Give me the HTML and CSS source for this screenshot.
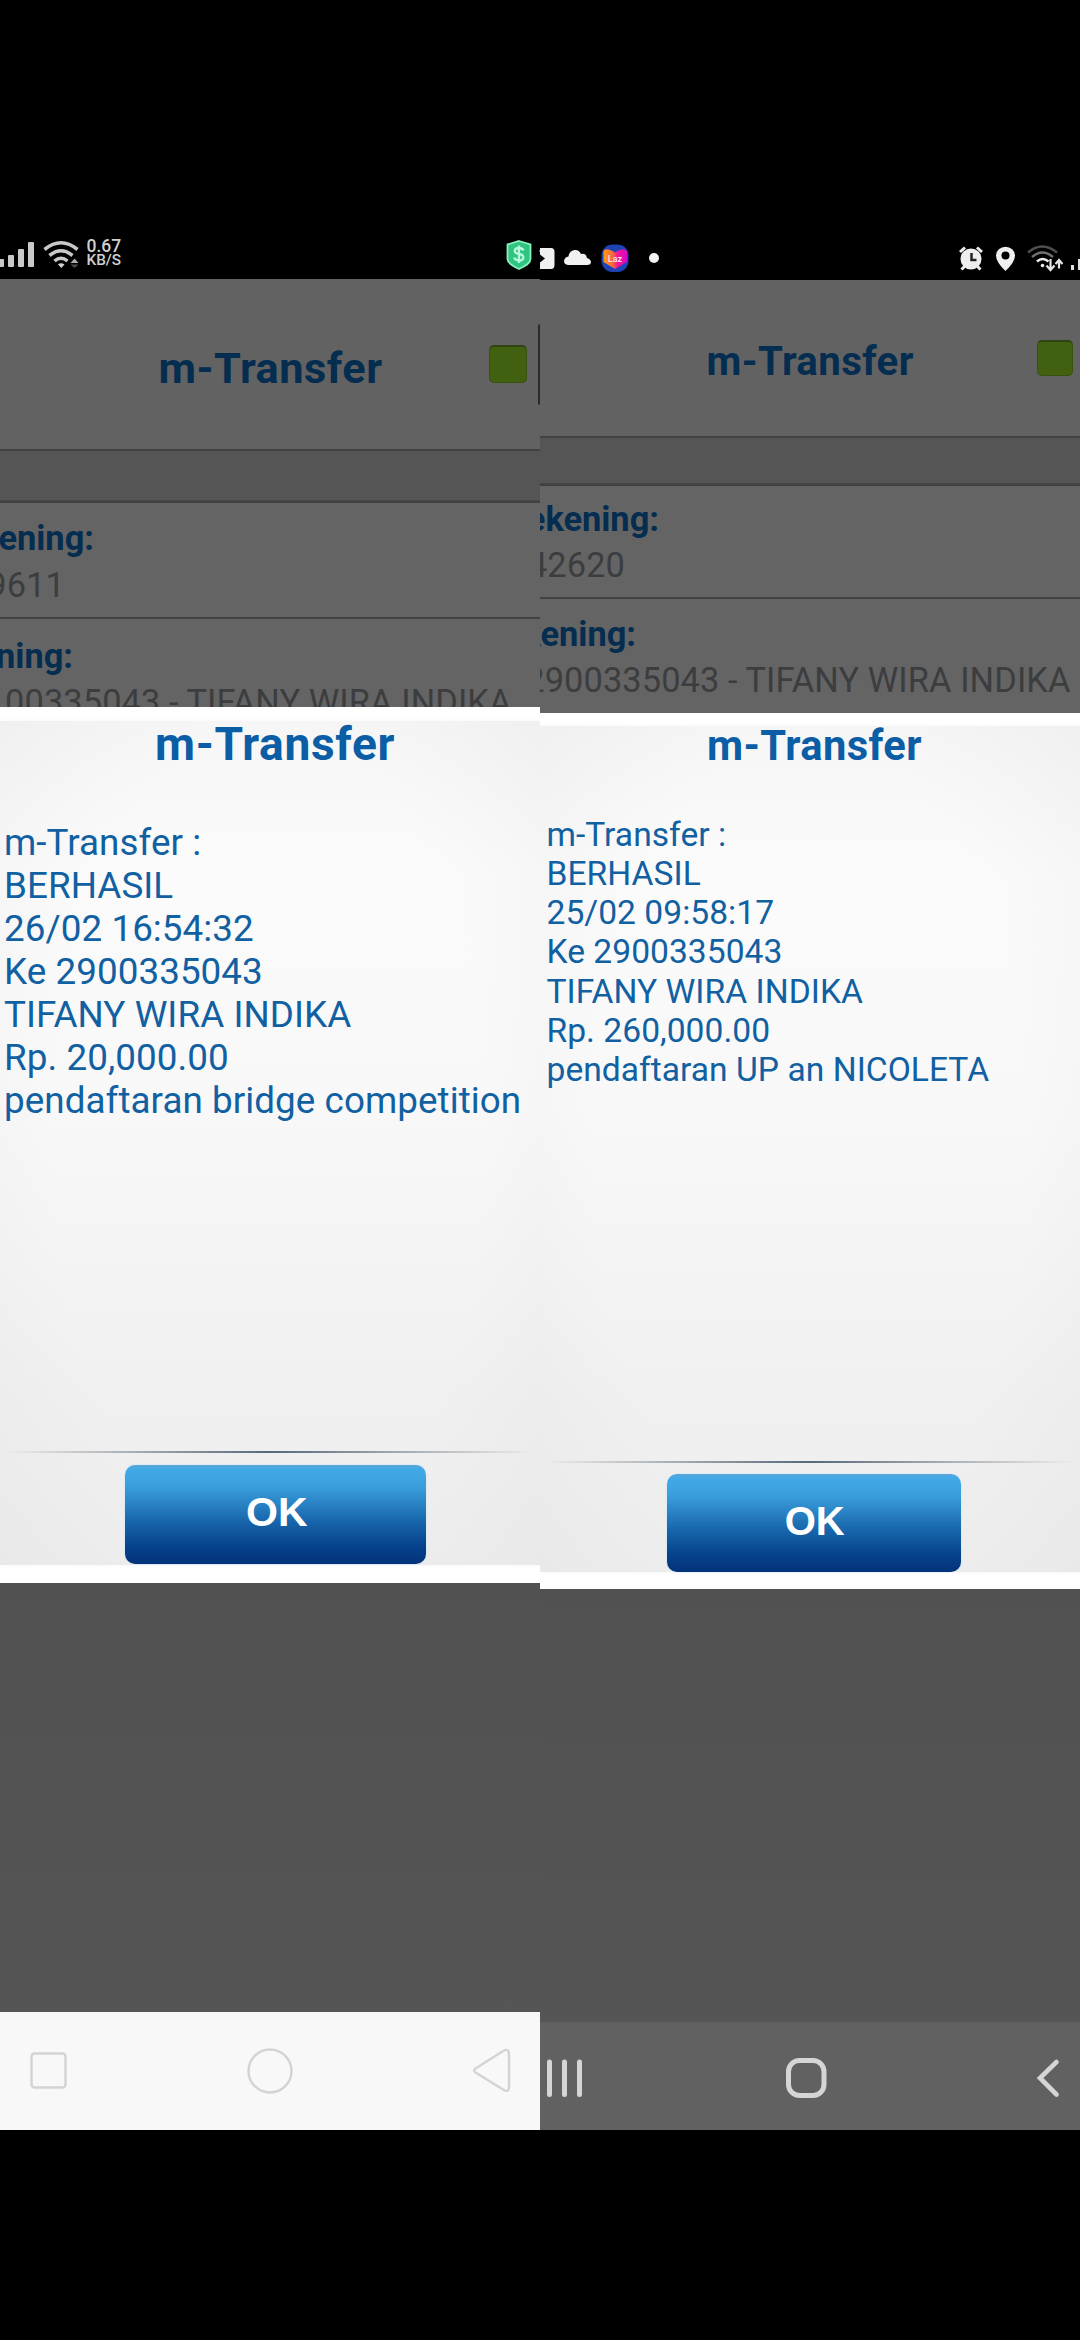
FILE: index.html
```html
<!DOCTYPE html>
<html lang="id">
<head>
<meta charset="utf-8">
<title>m-Transfer</title>
<link rel="stylesheet" href="styles.css">
</head>
<body>
<main class="board">
  <section class="phone phone-a">
    <div class="status">
      <svg class="status-left" width="82" height="45" viewBox="0 0 82 45">
        <g fill="#c9c9c9"><rect x="-3" y="24" width="7" height="8" rx="1"/><rect x="8" y="20" width="6" height="12" rx="1"/><rect x="18" y="14" width="6" height="18" rx="1"/><rect x="28" y="7" width="6" height="25" rx="1"/></g>
        <g fill="none" stroke="#c9c9c9" stroke-width="3.6"><path d="M44.500 14.500Q61 1 77.500 14.500"/><path d="M49.500 20.500Q61 11 72.500 20.500"/><path d="M54.500 26Q61 20.500 67.500 26"/></g>
        <path d="M58 29.500Q61 27 64.500 29.500L61.300 33Z" fill="#d4d4d4"/>
        <path d="M70.500 28L74.500 23.500L78.500 28Z" fill="#aaa"/><path d="M70.500 29.500L74.500 33L78.500 29.500Z" fill="#4c4c4c"/>
      </svg>
      <div class="speed"><span class="rate">0.67</span><span class="unit">KB/S</span></div>
      <svg class="status-right" width="34" height="45" viewBox="0 0 34 45">
        <path d="M13 6L24.500 9.500V24Q24.500 29 13 34Q1.500 29 1.500 24V9.500Z" fill="#2fc482" stroke="#8af0bd" stroke-width="1.800"/>
        <path d="M17.500 15.500Q16.500 13 13 13Q8.800 13 8.800 16Q8.800 18.300 13 19Q17.400 19.700 17.400 22.500Q17.400 25.500 13 25.500Q9 25.500 8.300 22.600M13 10.500V28" fill="none" stroke="#b9f8da" stroke-width="2.300"/>
        <circle cx="34" cy="16" r="1" fill="#888"/>
      </svg>
    </div>
    <header class="header"><h1 class="title">m-Transfer</h1><span class="led"></span></header>
    <div class="band"></div>
    <div class="entry"><b class="label">ening:</b><span class="value">9611</span></div>
    <div class="entry"><b class="label">ning:</b><span class="value">00335043 - TIFANY WIRA INDIKA</span></div>
    <div class="dialog">
      <div class="panel">
        <h2 class="dialog-title">m-Transfer</h2>
        <p class="message">m-Transfer :<br>BERHASIL<br>26/02 16:54:32<br>Ke 2900335043<br>TIFANY WIRA INDIKA<br>Rp. 20,000.00<br>pendaftaran bridge competition</p>
        <div class="rule"></div>
        <button class="ok">OK</button>
      </div>
    </div>
    <div class="backdrop"></div>
    <nav class="nav">
      <svg width="540" height="118" viewBox="0 0 540 118" fill="none" stroke="#d3d3d3" stroke-width="2.400">
        <rect x="31.500" y="41.500" width="34" height="34" rx="3"/>
        <circle cx="270" cy="59" r="21.500"/>
        <path d="M475.500 56.500L503.500 38.800Q509 36 509 42V75Q509 81 503.500 77.800L475.500 60.500Q472.500 58.500 475.500 56.500Z"/>
      </svg>
    </nav>
    <span class="edge"></span>
  </section>

  <section class="phone phone-b">
    <div class="status">
      <svg class="status-left" width="130" height="45" viewBox="0 0 130 45">
        <path d="M0 13H11Q14.500 13 14.500 17V30Q14.500 34 11 34H0V27.500L5 23.500L0 19.500Z" fill="#f0f0f0"/>
        <path d="M28 30Q24 29.500 24 26Q24.500 22 28.500 21.500Q29 16 34.500 15Q39 14.500 41 19Q46 17.500 47 23Q51 24 51 27.500Q50.500 30 47 30Z" fill="#f2f2f2"/>
        <rect x="61.500" y="9.500" width="27" height="27.500" rx="11" fill="#1d43b4"/>
        <path d="M75 34L63.500 27V16Q66 12 75 17.500Q84 12 87 16V27Z" fill="url(#heart)"/>
        <text class="badge" x="75" y="27" text-anchor="middle">Laz</text>
        <circle cx="114" cy="23" r="5" fill="#f4f4f4"/>
        <defs><linearGradient id="heart"><stop offset="0" stop-color="#ff9b12"/><stop offset=".4" stop-color="#fa6540"/><stop offset=".6" stop-color="#f51398"/><stop offset="1" stop-color="#d30ac4"/></linearGradient></defs>
      </svg>
      <svg class="status-right" width="130" height="45" viewBox="0 0 130 45">
        <circle cx="21" cy="24" r="10.500" fill="#eee"/>
        <path d="M10 17L15 12.500M27 12.500L32 17M14.500 31.500L11.500 34.500M27.500 31.500L30.500 34.500" stroke="#eee" stroke-width="3"/>
        <path d="M21.500 18V25H26.500" fill="none" stroke="#222" stroke-width="2.500"/>
        <path d="M55.500 36Q46 27 46 20.500A9.500 8.700 0 0 1 65 20.500Q65 27 55.500 36Z" fill="#f0f0f0"/><circle cx="55.500" cy="20.500" r="4" fill="#000"/>
        <g fill="none" stroke-width="2.500"><path d="M78 17.500Q92 5.500 107 17.500" stroke="#4f4f4f"/><path d="M82 22Q92.500 13 103 22" stroke="#6f6f6f"/><path d="M87 26.500Q92.500 21.500 98.500 26.500" stroke="#eee"/></g>
        <circle cx="92.500" cy="30.500" r="1.800" fill="#eee"/>
        <path d="M100.500 24V34M96.500 30.500L100.500 35L104.500 30.500M109 33.500V25M105.500 29L109 25L112.500 29" fill="none" stroke="#e5e5e5" stroke-width="2.200"/>
        <path d="M121 30h3v5h-3zM128 24h3v11h-3z" fill="#e0e0e0"/>
      </svg>
    </div>
    <header class="header"><h1 class="title">m-Transfer</h1><span class="led"></span></header>
    <div class="band"></div>
    <div class="entry"><b class="label">ekening:</b><span class="value">42620</span></div>
    <div class="entry"><b class="label">kening:</b><span class="value">2900335043 - TIFANY WIRA INDIKA</span></div>
    <div class="dialog">
      <div class="panel">
        <h2 class="dialog-title">m-Transfer</h2>
        <p class="message">m-Transfer :<br>BERHASIL<br>25/02 09:58:17<br>Ke 2900335043<br>TIFANY WIRA INDIKA<br>Rp. 260,000.00<br>pendaftaran UP an NICOLETA</p>
        <div class="rule"></div>
        <button class="ok">OK</button>
      </div>
    </div>
    <div class="backdrop"></div>
    <nav class="nav">
      <svg width="540" height="108" viewBox="0 0 540 108" fill="none" stroke="#d5d5d5" stroke-width="5" stroke-linecap="round">
        <path d="M9.500 40V72.500M24.500 40V72.500M39.500 40V72.500"/>
        <rect x="248.500" y="38.500" width="35.500" height="35" rx="11"/>
        <path d="M516.500 40L500 56L516.500 72.500" stroke-width="4.600"/>
      </svg>
    </nav>
  </section>
</main>
</body>
</html>
```
FILE: styles.css
```css
* { box-sizing: border-box; margin: 0; padding: 0; }

body { background: #000; font-family: Roboto, sans-serif; }

.board {
  display: grid;
  grid-template-columns: 540px 540px;
  width: 1080px;
  height: 2340px;
  overflow: hidden;
}

.phone {
  position: relative;
  display: grid;
  grid-template-columns: 540px;
  height: 2130px;
  overflow: hidden;
}

/* status, header, band, entry, entry, dialog, backdrop, nav */
.phone-a { grid-template-rows: 279px 170px 52px 116px 90px 876px 429px 118px; }
.phone-b { grid-template-rows: 280px 156px 48px 112.500px 116px 876.500px 433px 108px; }

.status { display: flex; align-items: flex-start; padding-top: 235px; overflow: hidden; }
.status-left, .status-right { flex: none; }
.status-right { margin-left: auto; }

.speed {
  display: flex;
  flex-direction: column;
  padding: 4px 0 0 4.500px;
  color: #d0d0d0;
  font-weight: 500;
  line-height: 14px;
}
.rate { font-size: 17.500px; }
.unit { font-size: 15.300px; line-height: 15px; }
.badge { font: bold 9px Roboto, sans-serif; fill: #ffd9e6; }

.header {
  display: flex;
  align-items: flex-start;
  background: #626262;
}
.phone-a .header { padding: 68px 13px 0 158.500px; }
.phone-b .header { padding: 62px 7px 0 166.500px; }

.title { color: #042d50; font-weight: 700; line-height: 1; }
.phone-a .title { font-size: 43.300px; letter-spacing: .5px; }
.phone-b .title { font-size: 40.200px; letter-spacing: .4px; }

.led {
  width: 38px;
  height: 38px;
  margin: -2px 0 0 auto;
  border: 1px solid #39510f;
  border-top: 2px solid #304412;
  border-radius: 5px;
  background: #416010;
}
.phone-b .led { width: 36px; height: 36px; margin-top: -2px; }

.band {
  background: #555;
  border-top: 2px solid #424242;
  border-bottom: 1px solid #474747;
}

.entry {
  display: flex;
  flex-direction: column;
  align-items: flex-end;
  overflow: hidden;
  background: #646464;
  border-top: 2px solid #414141;
  font-size: 34.400px;
  line-height: 40px;
  white-space: nowrap;
}
.label { color: #042d50; font-weight: 700; }
.value { color: #3b3d3f; letter-spacing: .08px; }

.phone-a .label { margin-top: 14.500px; }
.phone-a .value { margin-top: 7px; }
.phone-b .label { margin-top: 12.500px; }
.phone-b .value { margin-top: 6px; }
.phone-a .entry .label { margin-right: 446px; }
.phone-a .entry .value { margin-right: 475px; }
.phone-a .entry + .entry .label { margin-top: 17px; margin-right: 467px; }
.phone-a .entry + .entry .value { margin-top: 6px; margin-right: 28.500px; }
.phone-b .entry .label { margin-right: 421px; }
.phone-b .entry .value { margin-right: 455px; }
.phone-b .entry + .entry .label { margin-top: 15.500px; margin-right: 444px; }
.phone-b .entry + .entry .value { margin-right: 9.500px; }

.dialog { background: #fff; }
.phone-a .dialog { padding: 14px 0 18px; }
.phone-b .dialog { padding: 13px 0 17.500px; }

.panel {
  display: flex;
  flex-direction: column;
  height: 100%;
  background:
    radial-gradient(ellipse 62% 75% at 50% 50%, transparent 65%, rgba(205, 205, 205, .2) 118%),
    linear-gradient(#f6f6f6, #fbfbfb 18%, #f8f8f8 45%, #f0f0f0 80%, #eee);
  box-shadow: 0 0 4px #f4f4f4;
}

.dialog-title { color: #0b5ea6; font-weight: 700; line-height: 1; }
.phone-a .dialog-title { font-size: 46.200px; letter-spacing: .65px; margin: 0 0 0 155px; }
.phone-b .dialog-title { font-size: 41.700px; letter-spacing: .4px; margin: -1px 0 0 167px; }

.message { color: #1160a1; white-space: nowrap; }
.phone-a .message { font-size: 36.800px; letter-spacing: .06px; line-height: 43.080px; margin: 53.500px 0 0 4px; }
.phone-b .message { font-size: 33.600px; letter-spacing: .03px; line-height: 39.200px; margin: 48.500px 0 0 6.500px; }

.rule {
  flex: none;
  height: 2.500px;
  margin-top: auto;
  background: linear-gradient(90deg, transparent 1%, #a7adb2 25%, #566879 50%, #a7adb2 75%, transparent 99%);
}

.ok {
  flex: none;
  border: 0;
  border-radius: 10px;
  background: linear-gradient(#5ba7d5, #42a9e7 4%, #3a9edc 22%, #1764aa 58%, #06438c 82%, #03327a);
  color: #fff;
  font-family: "Liberation Sans", sans-serif;
  font-weight: 700;
  box-shadow: 0 0 2px #b7e1ff;
}
.phone-a .ok { width: 301.500px; height: 99px; margin: 12px 0 1px 124.500px; font-size: 41px; padding: 0 0 4px 3px; }
.phone-b .ok { width: 293.500px; height: 98px; margin: 10.500px 0 0 127px; font-size: 40px; padding: 0 0 3px 2px; }

.backdrop { background: linear-gradient(#515151, #555); }

.nav { display: flex; }
.phone-a .nav { background: #f8f8f8; }
.phone-b .nav { background: #616161; }

/* drawer handle peeking in over the right side */
.edge {
  position: absolute;
  top: 324px;
  right: 0;
  width: 2px;
  height: 81px;
  border-radius: 2px 0 0 2px;
  background: #292b2e;
}
```
